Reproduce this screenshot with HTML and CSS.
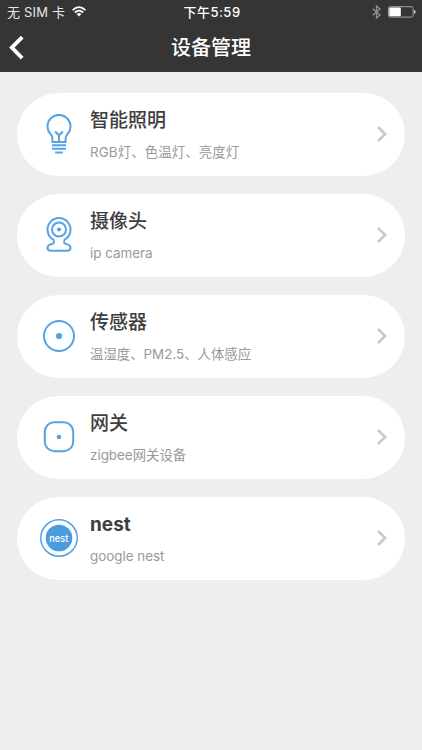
FILE: index.html
```html
<!DOCTYPE html>
<html lang="zh-CN">
<head>
<meta charset="utf-8">
<title>设备管理</title>
<link rel="stylesheet" href="styles.css">
</head>
<body>
<header class="header">
  <div class="status">
    <div class="carrier"><span>无 SIM 卡</span>
      <svg width="14" height="11" viewBox="0 0 14 11" fill="none" stroke="#fff" stroke-width="1.7"><path d="M.6 4.1Q7-1.7 13.4 4.1M2.9 6.5Q7 2.8 11.1 6.5"/><path d="M4.6 8Q7 6 9.4 8L7 10.5Z" fill="#fff" stroke="none"/></svg>
    </div>
    <time class="time">下午5:59</time>
    <div class="power">
      <svg width="9" height="14" viewBox="0 0 9 14" fill="none" stroke="#929292" stroke-width="1.3"><path d="M.8 3.8 8 10.1 4.5 13V1L8 3.9.8 10.2"/></svg>
      <svg width="28" height="12" viewBox="0 0 28 12"><rect x=".5" y=".7" width="24.6" height="10.4" rx="1.8" fill="none" stroke="#a5a5a5"/><rect x="1.3" y="1.5" width="11.5" height="8.8" rx=".7" fill="#fff"/><path d="M26 4q1.7.3 1.7 1.9T26 7.8Z" fill="#c8c8c8"/></svg>
    </div>
  </div>
  <nav class="nav">
    <svg class="back" width="16" height="26" viewBox="0 0 16 26" fill="none" stroke="#fff" stroke-width="3.8"><path d="M13.2 2.1 2.8 12.6 13.2 23.2"/></svg>
    <h1 class="title">设备管理</h1>
  </nav>
</header>
<main class="list">
  <section class="card">
    <svg class="icon" viewBox="0 0 40 40" fill="none" stroke="#56a3e3" stroke-width="2"><path d="M13.4 28V24.2Q13.4 21.6 11.2 19.8A11.5 11.5 0 1 1 28.8 19.8Q26.6 21.6 26.6 24.2V28ZM20 28V21M16.1 17.5 20 21.3 23.9 17.5M13 31.2H27M13 34.7H27M16.2 38.4H23.8"/></svg>
    <div class="copy"><h2>智能照明</h2><p class="lights">RGB灯、色温灯、亮度灯</p></div>
    <svg class="arrow" viewBox="0 0 10 16"><path d="m1 1 7.2 7L1 15"/></svg>
  </section>
  <section class="card">
    <svg class="icon" viewBox="0 0 40 40" fill="none" stroke="#56a3e3" stroke-width="2"><path d="M14.5 24.7A11.5 11.5 0 1 1 25.5 24.7C24.2 28.6 26 28.7 28.6 29.4C32.6 30.5 32.4 35.8 28.3 35.8H11.7C7.6 35.8 7.4 30.5 11.4 29.4C14 28.7 15.8 28.6 14.5 24.7Z"/><circle cx="20" cy="14.5" r="7"/><circle cx="20" cy="14.5" r="2.1" fill="#56a3e3" stroke="none"/></svg>
    <div class="copy"><h2>摄像头</h2><p>ip camera</p></div>
    <svg class="arrow" viewBox="0 0 10 16"><path d="m1 1 7.2 7L1 15"/></svg>
  </section>
  <section class="card">
    <svg class="icon" viewBox="0 0 40 40" fill="none" stroke="#56a3e3" stroke-width="2"><circle cx="20" cy="20" r="15"/><circle cx="20" cy="20" r="3.1" fill="#56a3e3" stroke="none"/></svg>
    <div class="copy"><h2>传感器</h2><p>温湿度、PM2.5、人体感应</p></div>
    <svg class="arrow" viewBox="0 0 10 16"><path d="m1 1 7.2 7L1 15"/></svg>
  </section>
  <section class="card">
    <svg class="icon" viewBox="0 0 40 40" fill="none" stroke="#56a3e3" stroke-width="2"><rect x="5.8" y="5.2" width="28.4" height="29" rx="9.5"/><circle cx="20" cy="20" r="2.3" fill="#56a3e3" stroke="none"/></svg>
    <div class="copy"><h2>网关</h2><p>zigbee网关设备</p></div>
    <svg class="arrow" viewBox="0 0 10 16"><path d="m1 1 7.2 7L1 15"/></svg>
  </section>
  <section class="card">
    <svg class="icon" viewBox="0 0 40 40"><circle cx="20" cy="20" r="18.2" fill="none" stroke="#56a3e3" stroke-width="1.5"/><circle cx="20" cy="20" r="13.3" fill="#4b9cdf"/><text class="logo" x="10.3" y="23.7" textLength="19" lengthAdjust="spacingAndGlyphs">nest</text></svg>
    <div class="copy"><h2 class="brand">nest</h2><p>google nest</p></div>
    <svg class="arrow" viewBox="0 0 10 16"><path d="m1 1 7.2 7L1 15"/></svg>
  </section>
</main>
</body>
</html>
```
FILE: styles.css
```css
* { box-sizing: border-box; }
body { margin: 0; min-height: 750px; background: #eee; font-family: Inter, "Noto Sans CJK SC", sans-serif; }
h1, h2, p { margin: 0; }
svg { display: block; flex: none; }
.header { height: 72px; background: #353535; color: #fff; }
.status { height: 23px; display: grid; grid-template-columns: 1fr auto 1fr; align-items: center; padding: 0 6px 0 8px; font-size: 13px; line-height: 22px; }
.carrier { display: flex; align-items: center; gap: 7px; margin-left: -1px; color: #e6e6e6; letter-spacing: .2px; }
.time { font-weight: 500; letter-spacing: .5px; }
.power { display: flex; align-items: center; justify-content: flex-end; gap: 7px; }
.nav { height: 49px; display: grid; grid-template-columns: 40px 1fr 40px; align-items: center; }
.back { margin-left: 9px; }
.title { text-align: center; font-size: 20px; font-weight: 500; line-height: 28px; }
.list { padding: 20.6px 17px 0; display: flex; flex-direction: column; gap: 18.1px; }
.card { height: 83px; border-radius: 41.5px; background: #fff; display: flex; align-items: center; padding: 0 18px 0 22px; }
.icon { width: 40px; height: 40px; }
.copy { flex: 1; height: 83px; padding: 13.4px 0 0 11px; }
.copy h2 { font-size: 19px; line-height: 30px; font-weight: 500; color: #3e3e3e; }
.copy p { margin-top: 6px; font-size: 13.4px; line-height: 20px; color: #999; }
.copy .lights { letter-spacing: .12px; }
.copy .brand { font-weight: 700; }
.arrow { width: 10px; height: 16px; fill: none; stroke: #c8c8c8; stroke-width: 2.5; }
.logo { font: 500 10px Inter, sans-serif; fill: #fff; }
```
